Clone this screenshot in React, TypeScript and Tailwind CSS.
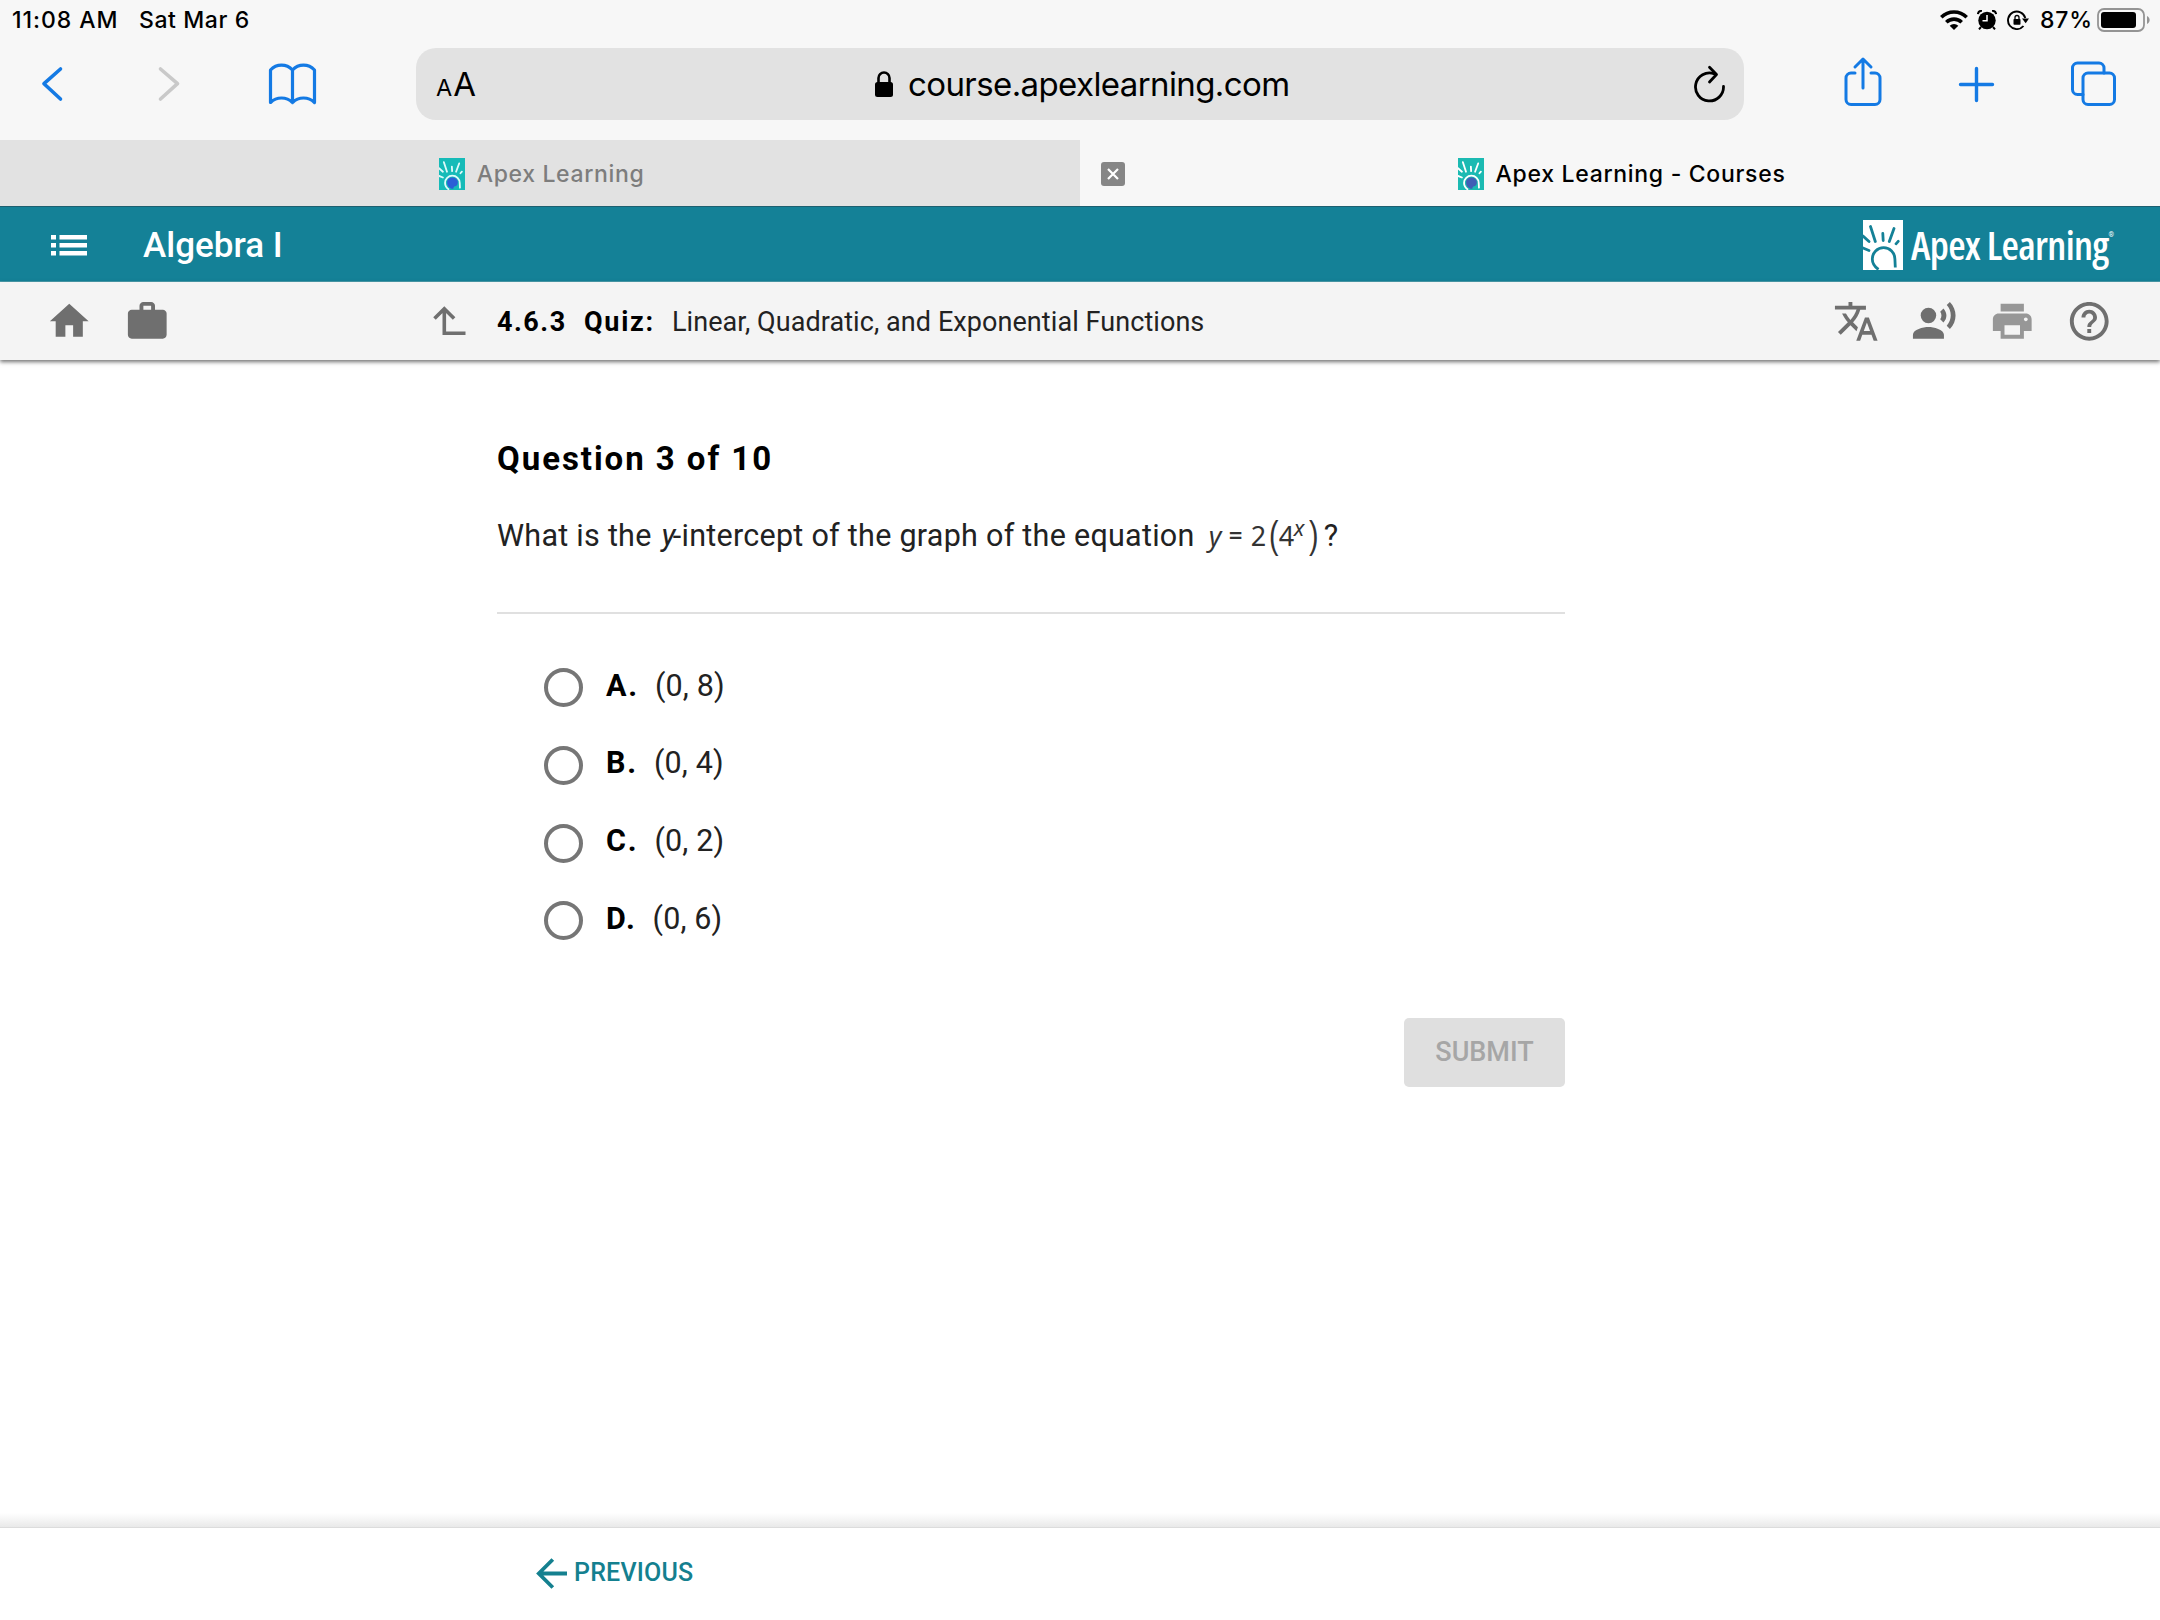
import type { ReactNode } from "react";

const answers = [
  { letter: "A.", value: "(0, 8)" },
  { letter: "B.", value: "(0, 4)" },
  { letter: "C.", value: "(0, 2)" },
  { letter: "D.", value: "(0, 6)" },
];

function MaterialIcon({ className, children }: { className?: string; children: ReactNode }) {
  return (
    <svg viewBox="0 0 24 24" fill="currentColor" className={`size-[46.5px] shrink-0 ${className ?? ""}`}>
      {children}
    </svg>
  );
}

function ApexMark({ className, bg, fg, face }: { className: string; bg: string; fg: string; face: string }) {
  return (
    <svg viewBox="0 0 40 50" preserveAspectRatio="none" className={`shrink-0 ${className}`}>
      <rect width="40" height="50" fill={bg} />
      <g stroke={fg} strokeWidth="2.8" strokeLinecap="round" fill="none">
        <path d="M7.5 6.5 12.3 21.5M19.8 13.5 20.2 20.5M31 8.5 26.3 21.5M35.2 21.3 33 23.8M0 16 6 21.5M0 28 6 30.5" />
      </g>
      <path d="M15.5 49.500Q9.300 45 9.300 39A11.300 11.300 0 0 1 31.900 39L32.300 47.500" fill="none" stroke={fg} strokeWidth="2.8" />
      <path d="M20.5 30.5c5.5 0 8.500 3.500 8.500 7.500 0 3.500-1.500 5.500-4 6-2.200.4-2.500 1-3 4-5 .5-9.500-4-9.500-9.500s3.500-8 8-8z" fill={face} />
    </svg>
  );
}

function StatusBar() {
  return (
    <div className="flex h-10 items-center pl-[12px] pr-[9px] text-[23px] font-medium leading-none text-black">
      <span className="w-[127px] tracking-[0.95px]">11:08 AM</span>
      <span className="tracking-[0.6px]">Sat Mar 6</span>
      <div className="ml-auto flex items-center">
        <svg viewBox="0 0 28 20" className="h-5 w-7" fill="none" stroke="black" strokeWidth="3.6">
          <path d="M1.3 7.3a18 18 0 0 1 25.4 0M6.3 12.3a11 11 0 0 1 15.4 0" />
          <path d="M14 20l-4.300-4.300a6.100 6.100 0 0 1 8.600 0z" fill="black" stroke="none" />
        </svg>
        <svg viewBox="0 0 20 20" className="ml-[9px] h-5 w-5">
          <circle cx="10" cy="10.5" r="8.7" />
          <path d="M.8 4.2A4 4 0 0 1 5 .8M19.2 4.2A4 4 0 0 0 15 .8" stroke="black" strokeWidth="2" fill="none" />
          <path d="M4 17l-2 2.3M16 17l2 2.3" stroke="black" strokeWidth="2" />
          <path d="M10 5v5.700H5.500" stroke="white" strokeWidth="1.5" fill="none" />
        </svg>
        <svg viewBox="0 0 23 20" className="ml-[10px] h-5 w-[23px]">
          <path d="M18.300 8A8.800 8.800 0 1 0 16.500 16" fill="none" stroke="black" strokeWidth="1.9" />
          <path d="M15 8.500h7l-3.300 4.800z" />
          <rect x="6.5" y="9" width="7" height="5.8" rx=".8" />
          <path d="M8 9.500V7.500a2 2 0 0 1 4 0v2" fill="none" stroke="black" strokeWidth="1.3" />
        </svg>
        <span className="ml-[10px] w-[57px] tracking-[0.8px]">87%</span>
        <svg viewBox="0 0 54 24" className="h-6 w-[54px]">
          <rect x="1" y="1" width="46" height="22" rx="6" fill="none" stroke="#949494" strokeWidth="1.8" />
          <rect x="4" y="4" width="35" height="16" rx="3" />
          <path d="M50 8c3.500 1.500 3.500 6.500 0 8z" fill="#949494" />
        </svg>
      </div>
    </div>
  );
}

function BrowserToolbar() {
  return (
    <div className="flex h-[100px] items-start pt-2 text-[#147ae4]">
      <svg viewBox="0 0 370 72" className="h-[72px] w-[370px]" fill="none" stroke="currentColor" strokeWidth="3.6" strokeLinecap="round" strokeLinejoin="round">
        <path d="M60.500 21 44 35.700 60.500 51" />
        <path d="M160.500 21 177.500 35.700 160.500 51" stroke="#c9c9c9" />
        <path d="M292.500 22c-6-6.500-16-6.500-22 0v32.500c6-6 16-6 22 0 6-6 16-6 22 0V22c-6-6.500-16-6.500-22 0zM292.500 22v32.500" strokeWidth="3.2" />
      </svg>
      <div className="ml-[46px] flex h-[72px] w-[1328px] items-center rounded-[20px] bg-[#e2e2e2] pl-5 pr-[19px] text-black">
        <div className="flex w-[439px] items-baseline leading-none">
          <span className="mr-px text-[23.5px]">A</span>
          <span className="text-[33px]">A</span>
        </div>
        <svg viewBox="0 0 18 26" className="h-[26px] w-[18px]">
          <rect y="11" width="18" height="15" rx="2.5" />
          <path d="M3.500 12V7a5.500 5.500 0 0 1 11 0v5" fill="none" stroke="black" strokeWidth="2.6" />
        </svg>
        <span className="ml-[15px] text-[33px] leading-none tracking-[-0.6px]">course.apexlearning.com</span>
        <svg viewBox="0 0 32 38" className="ml-auto h-[38px] w-8" fill="none" stroke="black" strokeWidth="2.8" strokeLinecap="round" strokeLinejoin="round">
          <path d="M30.500 21.500a14 14 0 1 1-9.500-12.800" />
          <path d="M16.500 2.200 23.500 9.500 16.500 17" />
        </svg>
      </div>
      <svg viewBox="0 0 416 72" className="h-[72px] w-[416px]" fill="none" stroke="currentColor" strokeWidth="3" strokeLinecap="round" strokeLinejoin="round">
        <path d="M111 25h-4a5 5 0 0 0-5 5V51.500a5 5 0 0 0 5 5h24a5 5 0 0 0 5-5V30a5 5 0 0 0-5-5h-4M119 40V12M111 19l8-8 8 8" />
        <path d="M216.500 36.500h32M232.500 20.500v32" strokeWidth="3.4" />
        <rect x="339" y="25" width="31.5" height="31.5" rx="5" />
        <path d="M339 46.500H333.500a5 5 0 0 1-5-5V20a5 5 0 0 1 5-5h21.500a5 5 0 0 1 5 5v5" />
      </svg>
    </div>
  );
}

function BrowserTabs() {
  return (
    <div className="grid h-[66px] grid-cols-2 text-[23px] leading-none">
      <div className="flex items-center justify-center gap-3 bg-[#e2e2e2] pl-[3px] pt-0.5 font-medium text-[#7d7d7d]">
        <ApexMark className="h-8 w-[26px]" bg="#16bbb8" fg="#dffafa" face="#2b5fd6" />
        <span className="tracking-[0.65px]">Apex Learning</span>
      </div>
      <div className="relative flex items-center justify-center gap-3 pl-[3px] pt-0.5 font-medium text-black">
        <svg viewBox="0 0 24 24" className="absolute left-[21px] top-[22px] size-6">
          <rect width="24" height="24" rx="3" fill="#868686" />
          <path d="M7 7l10 10M17 7 7 17" stroke="white" strokeWidth="2.2" />
        </svg>
        <ApexMark className="h-8 w-[26px]" bg="#1bbab2" fg="#ffffff" face="#3f5fb5" />
        <span className="tracking-[0.7px]">Apex Learning - Courses</span>
      </div>
    </div>
  );
}

function CourseHeader() {
  return (
    <header className="flex h-[76px] items-center border-b border-t border-b-[#4a9dac] border-t-[#1d5f70] bg-[#148197] pl-[51px] pt-0.5 text-white">
      <svg viewBox="0 0 36 21" className="h-[21px] w-9" fill="white">
        <path d="M0 0h5v4.500H0zM0 8h5v4.500H0zM0 16h5v4.500H0zM8.500 0H36v4.500H8.500zM8.500 8H36v4.500H8.500zM8.500 16H36v4.500H8.500z" />
      </svg>
      <h1 className="ml-14 text-[35px] font-medium leading-none">Algebra I</h1>
      <div className="ml-auto flex w-[297px] items-center">
        <ApexMark className="h-[50px] w-10" bg="#ffffff" fg="#148197" face="#ffffff" />
        <span className="ml-2 whitespace-nowrap font-['Open_Sans'] text-[40px] font-semibold leading-none tracking-[-0.7px] [font-stretch:75%]">
          Apex Learning
        </span>
        <span className="mb-5 text-[7px] leading-none">®</span>
      </div>
    </header>
  );
}

function LessonBar() {
  return (
    <div className="flex h-[78px] items-center bg-[#f4f4f4] pl-[46px] text-[#6f6f6f] shadow-[0_2px_4px_rgba(0,0,0,0.55)]">
      <MaterialIcon>
        <path d="M10 20v-6h4v6h5v-8h3L12 3 2 12h3v8z" />
      </MaterialIcon>
      <MaterialIcon className="ml-[31px]">
        <path d="M20 6h-4V4c0-1.110-.89-2-2-2h-4c-1.110 0-2 .89-2 2v2H4c-1.110 0-1.990.89-1.990 2L2 19c0 1.110.89 2 2 2h16c1.110 0 2-.89 2-2V8c0-1.110-.89-2-2-2zm-6 0h-4V4h4v2z" />
      </MaterialIcon>
      <svg viewBox="0 0 33 30" className="ml-[263px] h-[30px] w-[33px]" fill="none" stroke="currentColor" strokeWidth="3.6">
        <path d="M11.300 3v24.300H32.500M1.500 12.500l9.800-9.800 9.800 9.800" />
      </svg>
      <div className="ml-[31px] flex pt-0.5 text-[27px] leading-none">
        <strong className="w-[87px] font-bold tracking-[1.5px] text-black">4.6.3</strong>
        <strong className="w-[88px] font-bold tracking-[1.7px] text-black">Quiz:</strong>
        <span className="tracking-[0.07px] text-[#222]">Linear, Quadratic, and Exponential Functions</span>
      </div>
      <div className="ml-auto flex w-[327px] gap-[31px]">
        <MaterialIcon>
          <path d="M12.870 15.070l-2.540-2.510.03-.03c1.740-1.940 2.980-4.170 3.710-6.530H17V4h-7V2H8v2H1v1.990h11.170C11.500 7.920 10.440 9.750 9 11.350 8.070 10.320 7.300 9.190 6.690 8h-2c.73 1.630 1.730 3.170 2.980 4.560l-5.090 5.020L4 19l5-5 3.110 3.110.76-2.040zM18.500 10h-2L12 22h2l1.120-3h4.750L21 22h2l-4.500-12zm-2.620 7l1.620-4.330L19.120 17h-3.240z" />
        </MaterialIcon>
        <MaterialIcon>
          <circle cx="9" cy="9" r="4" />
          <path d="M9 15c-2.670 0-8 1.340-8 4v2h16v-2c0-2.660-5.330-4-8-4zm7.760-9.640l-1.680 1.690c.84 1.180.84 2.710 0 3.890l1.680 1.690c2.020-2.020 2.020-5.070 0-7.270zM20.070 2l-1.630 1.630c2.770 3.020 2.770 7.560 0 10.740L20.070 16c3.900-3.890 3.910-9.950 0-14z" />
        </MaterialIcon>
        <MaterialIcon className="ml-px text-[#979797]">
          <path d="M19 8H5c-1.660 0-3 1.340-3 3v6h4v4h12v-4h4v-6c0-1.660-1.340-3-3-3zm-3 11H8v-5h8v5zm3-7c-.55 0-1-.45-1-1s.45-1 1-1 1 .45 1 1-.45 1-1 1zm-1-9H6v4h12V3z" />
        </MaterialIcon>
        <MaterialIcon className="-ml-px">
          <path d="M11 18h2v-2h-2v2zm1-16C6.480 2 2 6.480 2 12s4.480 10 10 10 10-4.480 10-10S17.520 2 12 2zm0 18c-4.410 0-8-3.590-8-8s3.590-8 8-8 8 3.590 8 8-3.590 8-8 8zm0-14c-2.210 0-4 1.790-4 4h2c0-1.100.9-2 2-2s2 .9 2 2c0 2-3 1.750-3 5h2c0-2.250 3-2.500 3-5 0-2.210-1.790-4-4-4z" />
        </MaterialIcon>
      </div>
    </div>
  );
}

function Equation() {
  return (
    <span className="ml-[14px] inline-flex h-10 items-center pb-0.5 font-['Noto_Sans'] text-[27px] leading-none text-[#333]">
      <i className="w-[20px]">y</i>
      <span className="w-[22px] text-[24px] font-semibold">=</span>
      <span className="w-[18px]">2</span>
      <span className="w-[10px] origin-left scale-x-75 font-['Liberation_Sans'] text-[38px]">(</span>
      <span className="w-[15px]">4</span>
      <i className="mb-4 w-[15px] text-[22px]">x</i>
      <span className="w-[12px] origin-left scale-x-75 font-['Liberation_Sans'] text-[38px]">)</span>
    </span>
  );
}

function Question() {
  return (
    <section className="ml-[497px] w-[1068px]">
      <h2 className="pt-[83px] text-[33px] font-bold leading-[32px] tracking-[1.95px] text-black">Question 3 of 10</h2>
      <div className="mt-[38px] flex h-[46px] items-center whitespace-nowrap text-[30.5px] leading-none text-[#222]">
        <p className="tracking-[0.27px]">
          What is the <i className="-mr-[3px] ml-[2px]">y</i>-intercept of the graph of the equation
        </p>
        <Equation />
        <span className="ml-[3px]">?</span>
      </div>
      <hr className="mt-[53px] border-t-2 border-[#e0e0e0]" />
      <ul className="ml-[47px] mt-[54px]">
        {answers.map((answer) => (
          <li key={answer.letter} className="flex h-[77.8px] items-start">
            <span className="size-[39px] rounded-full border-4 border-[#767676]" />
            <span className="ml-[23px] pt-[2.5px] text-[30.5px] font-bold leading-[30px] tracking-[1.8px] text-black">{answer.letter}</span>
            <span className="ml-4 pt-[2.5px] text-[30.5px] leading-[30px] tracking-[0.15px] text-[#222]">{answer.value}</span>
          </li>
        ))}
      </ul>
      <button className="ml-auto mt-[39px] flex h-[69px] w-[161px] items-center justify-center rounded-[5px] bg-[#dfdfdf] text-[27px] font-medium leading-none text-[#a6a6a6]">
        SUBMIT
      </button>
    </section>
  );
}

export default function App() {
  return (
    <div className="flex h-[1620px] w-[2160px] flex-col overflow-hidden bg-white font-['Roboto',sans-serif]">
      <div className="bg-[#f7f7f7] font-['Inter',sans-serif]">
        <StatusBar />
        <BrowserToolbar />
        <BrowserTabs />
      </div>
      <CourseHeader />
      <LessonBar />
      <main className="flex-1">
        <Question />
      </main>
      <div className="h-[14px] bg-linear-to-b from-white to-[#e9e9e9]" />
      <footer className="flex h-[93px] items-center border-t border-[#dcdcdc] bg-white pb-0.5 pl-[536px] text-[#14808f]">
        <svg viewBox="0 0 31 31" className="h-[31px] w-[31px]" fill="none" stroke="currentColor" strokeWidth="3.8">
          <path d="M31 15.500H3M16.800 1.500l-14 14 14 14" />
        </svg>
        <span className="ml-[7px] pb-px text-[25px] font-medium leading-none tracking-[0.2px]">PREVIOUS</span>
      </footer>
    </div>
  );
}
